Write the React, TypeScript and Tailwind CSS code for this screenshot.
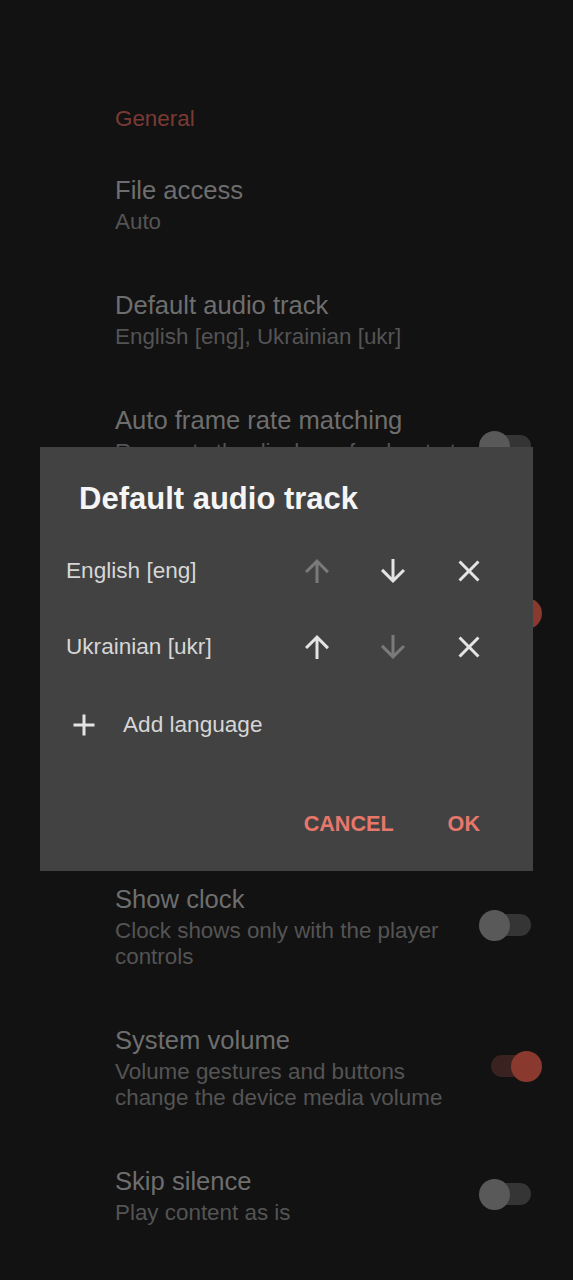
import React from 'react'

const font = { fontFamily: '"Liberation Sans", Arial, sans-serif' }

type Item = { title: string; summary: string[]; toggle?: 'on' | 'off'; extra?: string }

const items: Item[] = [
  { title: 'File access', summary: ['Auto'] },
  { title: 'Default audio track', summary: ['English [eng], Ukrainian [ukr]'] },
  {
    title: 'Auto frame rate matching',
    summary: ['Requests the display refresh rate to', 'match the video frame rate'],
    toggle: 'off',
  },
  {
    title: 'Tunneled playback',
    summary: ['Use tunneled video playback', 'on supported devices to improve', 'audio and video sync and', 'reduce power consumption'],
    toggle: 'on',
  },
  { title: 'Remember brightness', summary: ['Keep the last brightness level', 'between sessions'], extra: 'pb-[29px]' },
  {
    title: 'Show clock',
    summary: ['Clock shows only with the player', 'controls'],
    toggle: 'off',
  },
  {
    title: 'System volume',
    summary: ['Volume gestures and buttons', 'change the device media volume'],
    toggle: 'on',
  },
  { title: 'Skip silence', summary: ['Play content as is'], toggle: 'off' },
]

function Toggle({ on }: { on: boolean }) {
  return (
    <div className="relative w-[63px] h-[31px] flex items-center justify-center">
      <div className={`w-[40px] h-[22px] rounded-full ${on ? 'bg-[#3a2220]' : 'bg-[#353535]'}`} />
      <div
        className={`absolute top-0 w-[31px] h-[31px] rounded-full ${
          on ? 'right-0 bg-[#8a392f]' : 'left-0 bg-[#595959]'
        }`}
      />
    </div>
  )
}

function SettingRow({ item }: { item: Item }) {
  return (
    <div className={`flex items-center pl-[115px] pr-[31px] pt-[26px] ${item.extra ?? 'pb-[25px]'}`}>
      <div className="flex-1 min-w-0">
        <div className="text-[25.6px] leading-[38px] text-[#6e6e6e]">{item.title}</div>
        {item.summary.map((s, i) => (
          <div key={i} className="text-[22.4px] leading-[26px] text-[#545454]">
            {s}
          </div>
        ))}
      </div>
      {item.toggle && <Toggle on={item.toggle === 'on'} />}
    </div>
  )
}

function ArrowUp({ className }: { className: string }) {
  return (
    <svg viewBox="0 0 24 24" className={className} fill="currentColor">
      <path d="M4 12l1.41 1.41L11 7.83V20h2V7.83l5.58 5.59L20 12l-8-8-8 8z" />
    </svg>
  )
}

function ArrowDown({ className }: { className: string }) {
  return (
    <svg viewBox="0 0 24 24" className={className} fill="currentColor">
      <path d="M20 12l-1.41-1.41L13 16.17V4h-2v12.17l-5.58-5.59L4 12l8 8 8-8z" />
    </svg>
  )
}

function Close({ className }: { className: string }) {
  return (
    <svg viewBox="0 0 24 24" className={className} fill="currentColor">
      <path d="M19 6.41L17.59 5 12 10.59 6.41 5 5 6.41 10.59 12 5 17.59 6.41 19 12 13.41 17.59 19 19 17.59 13.41 12z" />
    </svg>
  )
}

function Plus({ className }: { className: string }) {
  return (
    <svg viewBox="0 0 24 24" className={className} fill="currentColor">
      <path d="M19 13h-6v6h-2v-6H5v-2h6V5h2v6h6v2z" />
    </svg>
  )
}

const languages = [
  { name: 'English [eng]', up: false, down: true },
  { name: 'Ukrainian [ukr]', up: true, down: false },
]

export default function App() {
  return (
    <div className="relative w-[573px] h-[1280px] overflow-hidden bg-[#121212]" style={font}>
      {/* settings list, dimmed behind the dialog */}
      <div className="pt-[105px]">
        <div className="pl-[115px] text-[22.4px] leading-[28px] text-[#7a3a33]">General</div>
        <div className="mt-[12px]">
          {items.map((it, i) => (
            <SettingRow key={i} item={it} />
          ))}
        </div>
      </div>

      {/* dialog */}
      <div className="absolute left-[40px] top-[447px] w-[493px] h-[424px] bg-[#424242]">
        <div className="pt-[34px] pl-[39px] text-[31px] leading-[36px] font-bold text-[#f5f5f5]">
          Default audio track
        </div>
        <div className="mt-[16px]">
          {languages.map((l) => (
            <div key={l.name} className="flex items-center h-[76px] pl-[26px] pr-[26px]">
              <div className="flex-1 text-[22.6px] text-[#d6d6d6]">{l.name}</div>
              <div className="w-[76px] flex justify-center">
                <ArrowUp className={`w-[36px] h-[36px] ${l.up ? 'text-[#e4e4e4]' : 'text-[#7a7a7a]'}`} />
              </div>
              <div className="w-[76px] flex justify-center">
                <ArrowDown className={`w-[36px] h-[36px] ${l.down ? 'text-[#e4e4e4]' : 'text-[#7a7a7a]'}`} />
              </div>
              <div className="w-[76px] flex justify-center">
                <Close className="w-[36px] h-[36px] text-[#e4e4e4]" />
              </div>
            </div>
          ))}
          <div className="flex items-center h-[76px] pt-[3px] pl-[26px] gap-[21px]">
            <Plus className="w-[36px] h-[36px] text-[#e4e4e4]" />
            <div className="text-[22.6px] text-[#d6d6d6]">Add language</div>
          </div>
        </div>
        <div className="mt-[39px] h-[48px] flex items-center justify-end gap-[54px] pr-[53px] text-[21.6px] font-bold text-[#e8776b]">
          <span>CANCEL</span>
          <span>OK</span>
        </div>
      </div>
    </div>
  )
}
